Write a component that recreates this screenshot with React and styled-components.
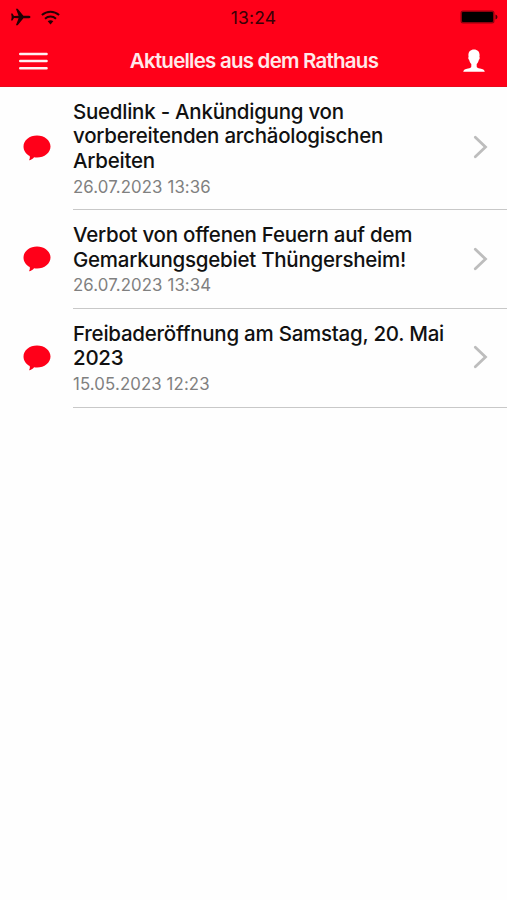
import styled, { createGlobalStyle } from "styled-components";

const GlobalStyle = createGlobalStyle`
  * {
    box-sizing: border-box;
    margin: 0;
    padding: 0;
  }

  body {
    background-color: #fff;
    font-family: Inter, "Liberation Sans", sans-serif;
  }

  svg {
    display: block;
  }
`;

const Screen = styled.div`
  min-height: 100vh;
  background-color: #fefefe;
  overflow: hidden;
`;

const Header = styled.header`
  height: 87px;
  background-color: #ff0019;
  border-bottom: 1px solid #e80a1c;
`;

const StatusBar = styled.div`
  height: 34px;
  padding: 0 9px 0 10px;
  display: grid;
  grid-template-columns: 1fr auto 1fr;
  align-items: center;
`;

const StatusIcons = styled.div`
  display: flex;
  align-items: center;
  gap: 10px;
`;

const Clock = styled.time`
  padding-right: 1px;
  color: #3a0006;
  font-size: 17.5px;
  letter-spacing: 0.2px;
`;

const Battery = styled.svg`
  justify-self: end;
`;

const NavBar = styled.div`
  height: 53px;
  padding: 0 22px 0 19px;
  display: grid;
  grid-template-columns: 1fr auto 1fr;
  align-items: center;
`;

const PageTitle = styled.h1`
  padding-left: 4px;
  color: #ffe9ea;
  font-size: 20.5px;
  font-weight: 600;
  letter-spacing: -0.77px;
  white-space: nowrap;
`;

const IconButton = styled.button`
  border: none;
  background: none;
  justify-self: ${(props) => (props.$end ? "end" : "start")};
`;

const List = styled.ul`
  list-style: none;
`;

const Row = styled.li`
  display: flex;
`;

const IconCell = styled.div`
  width: 73px;
  padding: 0 0 1px 23px;
  display: flex;
  align-items: center;
`;

const Content = styled.div`
  flex: 1;
  padding-right: 19px;
  display: flex;
  align-items: center;
  justify-content: space-between;
  border-bottom: 1px solid #c8c8c8;
`;

const Message = styled.div`
  padding: 12.5px 0 8.3px;
`;

const Title = styled.h2`
  color: #111;
  font-size: 20.5px;
  font-weight: 500;
  line-height: 24.7px;
  letter-spacing: -0.25px;
  white-space: pre-line;
`;

const DateText = styled.p`
  color: #808080;
  font-size: 16.8px;
  line-height: 27.5px;
  letter-spacing: 0.12px;
`;

const Chevron = styled.svg`
  margin-bottom: 1.5px;
`;

const news = [
  {
    title: "Suedlink - Ankündigung von\nvorbereitenden archäologischen\nArbeiten",
    date: "26.07.2023 13:36",
  },
  {
    title: "Verbot von offenen Feuern auf dem\nGemarkungsgebiet Thüngersheim!",
    date: "26.07.2023 13:34",
  },
  {
    title: "Freibaderöffnung am Samstag, 20. Mai\n2023",
    date: "15.05.2023 12:23",
  },
];

function PlaneIcon() {
  return (
    <svg width="21" height="18" viewBox="0 0 21 18" fill="#250004">
      <path d="M20.500 9c0-.9-1-1.300-2.300-1.300h-4.800L7.700.7H5.900l2.700 7-4.600.2L2.500 5.500H1.100L1.700 9l-.6 3.500h1.400l1.500-2.400 4.600.2-2.700 7h1.800l5.700-7h4.800c1.300 0 2.300-.4 2.300-1.300z" />
    </svg>
  );
}

function WifiIcon() {
  return (
    <svg width="19" height="15" viewBox="0 0 19 15">
      <g fill="none" stroke="#250004" strokeWidth="2">
        <path d="M.9 5.100c5-4.500 12.200-4.500 17.200 0" />
        <path d="M4 8.700c3.200-2.900 7.800-2.900 11 0" />
      </g>
      <path d="M6.700 11.300c1.600-1.400 4-1.400 5.600 0L9.500 14.500z" fill="#250004" />
    </svg>
  );
}

function BatteryIcon() {
  return (
    <Battery width="38" height="14" viewBox="0 0 38 14">
      <rect x=".5" y=".5" width="34" height="13" rx="2.500" fill="#8f000e" />
      <rect x="2" y="2" width="31" height="10" rx="1" fill="#000" />
      <path d="M35.500 4.500c2.600.7 2.600 4.300 0 5z" fill="#4a0007" />
    </Battery>
  );
}

function MenuIcon() {
  return (
    <svg width="29" height="18" viewBox="0 0 29 18" stroke="#fff0f1">
      <path
        d="M1.200 2h26.400M1.200 9h26.400M1.200 16.200h26.400"
        strokeWidth="2.400"
        strokeLinecap="round"
      />
    </svg>
  );
}

function UserIcon() {
  return (
    <svg width="22" height="24" viewBox="0 0 22 24" fill="#fff">
      <path d="M11 .4c3.500 0 5.600 2.200 5.600 5.700 0 .7-.1 1.300-.2 1.800.6.600.4 2.100-.5 2.800-.4 1.900-1.200 3.300-2.200 4.300v2.400c0 1.200 1.100 1.600 3.300 2 2.900.5 4.400 1.400 4.800 3.300H.2c.4-1.900 1.900-2.800 4.800-3.300 2.200-.4 3.300-.8 3.300-2V15c-1-1-1.800-2.400-2.200-4.300-.9-.7-1.100-2.200-.5-2.800-.1-.5-.2-1.100-.2-1.800C5.400 2.600 7.500.4 11 .4z" />
    </svg>
  );
}

function BubbleIcon() {
  return (
    <svg width="28" height="26" viewBox="0 0 28 26" fill="#ff0019">
      <path d="M14 .5c7.500 0 13.500 4.900 13.500 11s-6 11-13.500 11c-1 0-2-.1-2.900-.3-1.400 1.700-3.200 2.800-5.100 3.100.8-1.200 1.100-2.800.7-4.300C2.900 19 .5 15.500.5 11.500.5 5.400 6.500.5 14 .5z" />
    </svg>
  );
}

function ChevronIcon() {
  return (
    <Chevron width="15" height="24" viewBox="0 0 15 24" fill="none">
      <path
        d="M2.300 2.300 12.500 12 2.300 21.700"
        stroke="#bdbdbd"
        strokeWidth="2.800"
        strokeLinecap="round"
      />
    </Chevron>
  );
}

export default function App() {
  return (
    <Screen>
      <GlobalStyle />
      <Header>
        <StatusBar>
          <StatusIcons>
            <PlaneIcon />
            <WifiIcon />
          </StatusIcons>
          <Clock>13:24</Clock>
          <BatteryIcon />
        </StatusBar>
        <NavBar>
          <IconButton aria-label="Menü">
            <MenuIcon />
          </IconButton>
          <PageTitle>Aktuelles aus dem Rathaus</PageTitle>
          <IconButton $end aria-label="Profil">
            <UserIcon />
          </IconButton>
        </NavBar>
      </Header>

      <List>
        {news.map((item) => (
          <Row key={item.title}>
            <IconCell>
              <BubbleIcon />
            </IconCell>
            <Content>
              <Message>
                <Title>{item.title}</Title>
                <DateText>{item.date}</DateText>
              </Message>
              <ChevronIcon />
            </Content>
          </Row>
        ))}
      </List>
    </Screen>
  );
}
